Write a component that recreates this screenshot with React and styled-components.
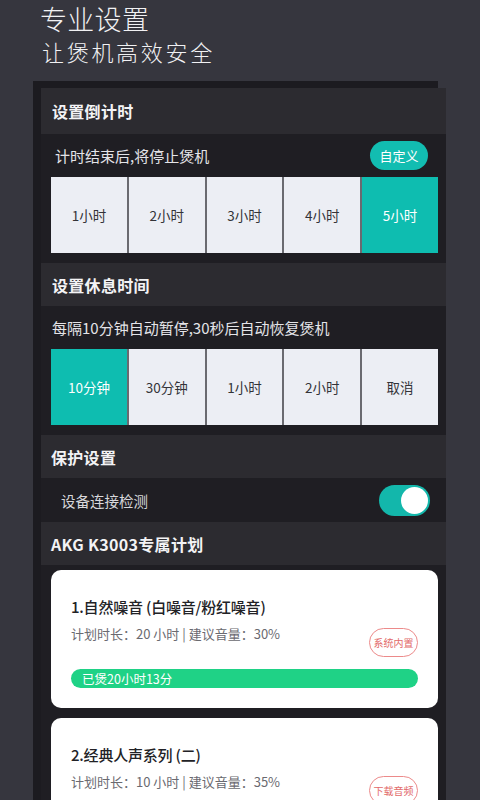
import React, { useState } from 'react';
import styled, { createGlobalStyle } from 'styled-components';

const GlobalStyle = createGlobalStyle`
  html, body {
    margin: 0;
    padding: 0;
    background: #36363e;
  }
  body {
    font-family: "Noto Sans CJK SC", "Noto Sans", "Liberation Sans", sans-serif;
    -webkit-font-smoothing: antialiased;
  }
`;

const Page = styled.div`
  width: 480px;
  height: 800px;
  overflow: hidden;
  background: #36363e;
`;

const Hero = styled.div`
  padding: 2px 0 0 40px;
  color: #f1f1f3;
  font-weight: 300;
`;

const HeroTitle = styled.div`
  font-size: 27px;
  line-height: 34px;
  letter-spacing: 0.3px;
`;

const HeroSubtitle = styled.div`
  font-size: 22px;
  line-height: 30px;
  letter-spacing: 2.7px;
  padding-left: 2px;
`;

const Screen = styled.div`
  margin: 22px 0 0 41px;
  width: 405px;
  height: 720px;
  background: #1f1e23;
  box-shadow: -8px -7px 0 #1c1b20;
`;

const SectionHeader = styled.div`
  height: ${({ $h }) => $h || 43}px;
  display: flex;
  align-items: center;
  padding-left: ${({ $indent }) => $indent || 11}px;
  background: #2c2b30;
  color: #f3f3f5;
  font-size: 16px;
  font-weight: 700;
  letter-spacing: 0.3px;
`;

const Block = styled.div`
  background: #1f1e23;
  padding: 0 8px 10px 10px;
`;

const HintRow = styled.div`
  height: 43px;
  display: flex;
  align-items: center;
  justify-content: space-between;
  padding-left: ${({ $indent }) => $indent || 1}px;
  color: #e4e4e8;
  font-size: 15px;
`;

const PillButton = styled.button`
  width: 58px;
  height: 29px;
  margin-right: 10px;
  border: none;
  border-radius: 15px;
  background: #12bdb1;
  color: #ffffff;
  font-family: inherit;
  font-size: 13px;
  padding: 0;
`;

const OptionGrid = styled.div`
  display: grid;
  grid-template-columns: repeat(5, 1fr);
  gap: 2px;
  background: #6a6a70;
`;

const Option = styled.div`
  height: 76px;
  display: flex;
  align-items: center;
  justify-content: center;
  background: ${({ $active }) => ($active ? '#0ebdb0' : '#eceef4')};
  color: ${({ $active }) => ($active ? '#ffffff' : '#333338')};
  font-size: 13.5px;
`;

const SwitchRow = styled.div`
  height: 44px;
  display: flex;
  align-items: center;
  justify-content: space-between;
  padding: 0 16px 0 20px;
  background: #1f1e23;
  color: #d8d8dc;
  font-size: 14.5px;
`;

const Switch = styled.div`
  width: 51px;
  height: 31px;
  border-radius: 16px;
  background: #13b7ab;
  display: flex;
  align-items: center;
  justify-content: flex-end;
  padding: 0 2px;
  box-sizing: border-box;
`;

const Knob = styled.div`
  width: 27px;
  height: 27px;
  border-radius: 50%;
  background: #ffffff;
`;

const PlanList = styled.div`
  display: flex;
  flex-direction: column;
  gap: 10px;
  padding: 5px 8px 0 10px;
`;

const PlanCard = styled.div`
  background: #ffffff;
  border-radius: 10px;
  padding: 27px 20px 20px 20px;
`;

const PlanTitle = styled.div`
  font-size: 15px;
  line-height: 20px;
  font-weight: 500;
  color: #222226;
  letter-spacing: -0.2px;
`;

const PlanMeta = styled.div`
  display: flex;
  justify-content: space-between;
  align-items: flex-start;
  margin-top: 7px;
  height: 33px;
`;

const MetaText = styled.div`
  font-size: 13px;
  line-height: 20px;
  color: #6a6a70;
`;

const Badge = styled.div`
  margin-top: 4px;
  width: 49px;
  height: 29px;
  box-sizing: border-box;
  border: 1px solid #ec8a8a;
  border-radius: 15px;
  display: flex;
  align-items: center;
  justify-content: center;
  color: #e26a6a;
  font-size: 10px;
  white-space: nowrap;
`;

const Progress = styled.div`
  margin-top: 12px;
  height: 19px;
  border-radius: 10px;
  background: #1fd286;
  color: #ffffff;
  font-size: 12.5px;
  display: flex;
  align-items: center;
  padding-left: 11px;
`;

const timerOptions = ['1小时', '2小时', '3小时', '4小时', '5小时'];
const restOptions = ['10分钟', '30分钟', '1小时', '2小时', '取消'];

const plans = [
  {
    title: '1.自然噪音 (白噪音/粉红噪音)',
    meta: '计划时长：20 小时 | 建议音量：30%',
    badge: '系统内置',
    progress: '已煲20小时13分',
  },
  {
    title: '2.经典人声系列 (二)',
    meta: '计划时长：10 小时 | 建议音量：35%',
    badge: '下载音频',
  },
];

export default function App() {
  const [timer, setTimer] = useState(4);
  const [rest, setRest] = useState(0);

  return (
    <Page>
      <GlobalStyle />
      <Hero>
        <HeroTitle>专业设置</HeroTitle>
        <HeroSubtitle>让煲机高效安全</HeroSubtitle>
      </Hero>

      <Screen>
        <SectionHeader $h={46}>设置倒计时</SectionHeader>
        <Block>
          <HintRow $indent={4}>
            计时结束后,将停止煲机
            <PillButton>自定义</PillButton>
          </HintRow>
          <OptionGrid>
            {timerOptions.map((label, i) => (
              <Option key={label} $active={i === timer} onClick={() => setTimer(i)}>
                {label}
              </Option>
            ))}
          </OptionGrid>
        </Block>

        <SectionHeader>设置休息时间</SectionHeader>
        <Block>
          <HintRow>每隔10分钟自动暂停,30秒后自动恢复煲机</HintRow>
          <OptionGrid>
            {restOptions.map((label, i) => (
              <Option key={label} $active={i === rest} onClick={() => setRest(i)}>
                {label}
              </Option>
            ))}
          </OptionGrid>
        </Block>

        <SectionHeader $indent={10}>保护设置</SectionHeader>
        <SwitchRow>
          设备连接检测
          <Switch>
            <Knob />
          </Switch>
        </SwitchRow>

        <SectionHeader $indent={10}>AKG K3003专属计划</SectionHeader>
        <PlanList>
          {plans.map((plan) => (
            <PlanCard key={plan.title}>
              <PlanTitle>{plan.title}</PlanTitle>
              <PlanMeta>
                <MetaText>{plan.meta}</MetaText>
                <Badge>{plan.badge}</Badge>
              </PlanMeta>
              {plan.progress && <Progress>{plan.progress}</Progress>}
            </PlanCard>
          ))}
        </PlanList>
      </Screen>
    </Page>
  );
}
